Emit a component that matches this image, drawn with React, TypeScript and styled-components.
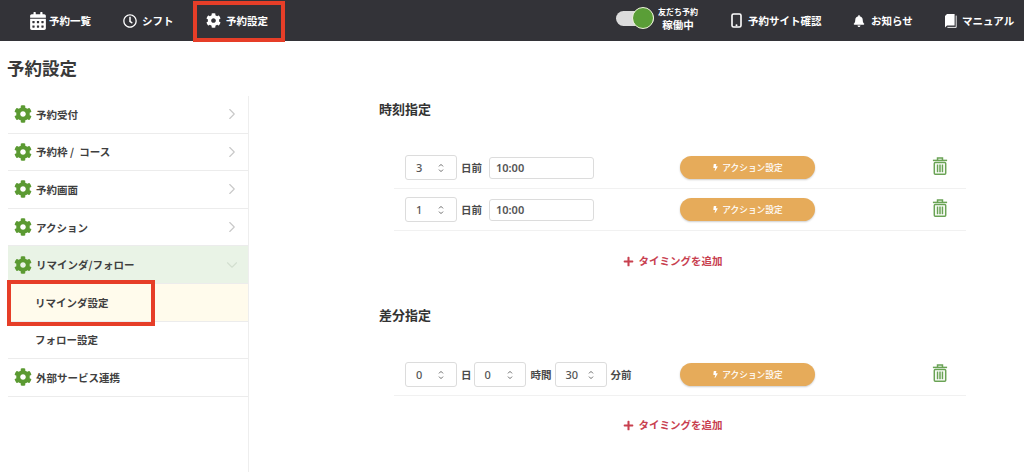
import React from 'react';
import styled, { createGlobalStyle } from 'styled-components';
import { FaBell, FaBolt, FaCalendarAlt, FaCog, FaPlus, FaRegClock } from 'react-icons/fa';
import { FiChevronDown, FiChevronRight } from 'react-icons/fi';

const GlobalStyle = createGlobalStyle`
  html, body {
    margin: 0;
    padding: 0;
    background: #fff;
    overflow: hidden;
  }
  body {
    font-family: "Noto Sans CJK JP", "Noto Sans", sans-serif;
    color: #3a3a3a;
  }
  * {
    box-sizing: border-box;
  }
`;

const Page = styled.div`
  width: 1024px;
  height: 472px;
  overflow: hidden;
`;

const Header = styled.header`
  height: 41px;
  background: #333338;
  display: flex;
  align-items: center;
  color: #fff;
  padding-left: 29px;
`;

const NavItem = styled.div<{ $width: number; $gap?: number }>`
  position: relative;
  height: 41px;
  width: ${(p) => p.$width}px;
  display: flex;
  align-items: center;
  gap: ${(p) => p.$gap ?? 5}px;
  font-size: 10.5px;
  font-weight: 700;
  white-space: nowrap;
`;

const HeaderBox = styled.div`
  position: absolute;
  left: -13px;
  top: 1px;
  width: 92px;
  height: 41px;
  border: 4px solid #e63e28;
`;

const Spacer = styled.div`
  flex: 1;
`;

const Toggle = styled.div`
  position: relative;
  width: 38px;
  height: 15px;
  border-radius: 8px;
  background: #dcdcdc;
  margin: 0 2px 5px 0;
`;

const Knob = styled.div`
  position: absolute;
  right: 0;
  top: -3.5px;
  width: 22px;
  height: 22px;
  border-radius: 50%;
  background: #5a9e37;
  border: 1.5px solid #eef3dc;
`;

const ToggleLabel = styled.div`
  width: 44px;
  display: flex;
  flex-direction: column;
  align-items: center;
  margin: 0 31px 3px 0;
  line-height: 1;
`;

const ToggleSmall = styled.span`
  font-size: 8px;
  font-weight: 700;
  margin-bottom: 4px;
  white-space: nowrap;
`;

const ToggleMain = styled.span`
  font-size: 10.5px;
  font-weight: 700;
`;

const PageTitle = styled.h1`
  margin: 0;
  height: 55px;
  padding: 14px 0 0 7px;
  font-size: 17.5px;
  line-height: 25px;
  font-weight: 700;
  color: #3a3a3a;
`;

const Body = styled.div`
  display: flex;
  align-items: flex-start;
`;

const Sidebar = styled.nav`
  width: 241px;
  height: 376px;
  margin-left: 8px;
  border-right: 1px solid #eeeeee;
`;

const MenuRow = styled.div<{ $open?: boolean; $current?: boolean }>`
  position: relative;
  height: 37.6px;
  display: flex;
  align-items: center;
  gap: 4px;
  padding: 0 7px 0 6px;
  border-bottom: 1px solid #ececec;
  background: ${(p) => (p.$open ? '#e9f3e6' : p.$current ? '#fffbec' : '#fff')};
  font-size: 10.5px;
  font-weight: 700;
  color: #3f3f3f;
`;

const SubRow = styled(MenuRow)`
  padding-left: 27px;
`;

const MenuLabel = styled.span`
  flex: 1;
  white-space: nowrap;
`;

const SideBox = styled.div`
  position: absolute;
  z-index: 2;
  left: -1px;
  top: -4px;
  width: 148px;
  height: 46px;
  border: 4px solid #e63e28;
`;

const Main = styled.main`
  flex: 1;
  padding: 0 58px 0 130px;
`;

const SectionTitle = styled.h2<{ $height: number }>`
  margin: 0;
  height: ${(p) => p.$height}px;
  font-size: 13px;
  line-height: 25px;
  font-weight: 700;
  color: #333;
`;

const Rows = styled.div`
  margin-left: 15px;
`;

const Row = styled.div`
  height: 42px;
  display: flex;
  align-items: center;
  padding: 0 11px;
  border-bottom: 1px solid #f1f1f1;
`;

const FieldGroup = styled.div`
  width: 275px;
  display: flex;
  align-items: center;
`;

const NumberBox = styled.div`
  width: 52px;
  height: 25px;
  display: flex;
  align-items: center;
  justify-content: space-between;
  padding: 0 12px 0 10px;
  border: 1px solid #dcdcdc;
  border-radius: 3px;
  font-family: "Noto Sans", sans-serif;
  font-size: 11px;
  font-weight: 500;
  color: #555;
`;

const Unit = styled.span<{ $left?: number; $right?: number }>`
  margin: 0 ${(p) => p.$right ?? 3}px 0 ${(p) => p.$left ?? 4}px;
  font-size: 10.5px;
  font-weight: 700;
  color: #4a4a4a;
  white-space: nowrap;
`;

const TimeBox = styled.div`
  width: 105px;
  height: 22px;
  display: flex;
  align-items: center;
  padding-left: 6px;
  border: 1px solid #dcdcdc;
  border-radius: 3px;
  font-family: "Noto Sans", sans-serif;
  font-size: 11px;
  font-weight: 600;
  color: #555;
`;

const ActionButton = styled.div`
  width: 135px;
  height: 23px;
  display: flex;
  align-items: center;
  justify-content: center;
  gap: 3px;
  border-radius: 12px;
  background: #e6ab5a;
  box-shadow: 0 1px 2px rgba(0, 0, 0, 0.2);
  color: #fff;
  font-size: 8.7px;
  font-weight: 500;
`;

const Trash = styled.div`
  margin: 0 7px 3px auto;
  display: flex;
`;

const AddRow = styled.div<{ $height: number; $top: number }>`
  height: ${(p) => p.$height}px;
  padding-top: ${(p) => p.$top}px;
  display: flex;
  justify-content: center;
  gap: 5px;
  color: #c8404f;
  font-size: 10.5px;
  font-weight: 700;
  line-height: 16px;
`;

const AddIcon = styled.span`
  display: flex;
  align-items: center;
  height: 16px;
  font-size: 11px;
`;

const GearIcon = styled(FaCog)`
  color: #5b9a32;
  font-size: 18px;
  flex-shrink: 0;
`;

const Stepper: React.FC = () => (
  <svg width="6" height="10" viewBox="0 0 6 10" fill="none" stroke="#6a6a6a" strokeWidth="1">
    <path d="M1 3.4 3 1.4 5 3.4" />
    <path d="M1 6.6 3 8.6 5 6.6" />
  </svg>
);

const PhoneIcon: React.FC = () => (
  <svg width="11" height="15" viewBox="0 0 11 15" fill="none">
    <rect x="1" y="1" width="9" height="13" rx="1.6" stroke="#fff" strokeWidth="1.6" />
    <circle cx="5.5" cy="12.2" r="1" fill="#fff" />
  </svg>
);

const BookIcon: React.FC = () => (
  <svg width="12" height="14" viewBox="0 0 12 14">
    <path d="M0 2 2 0H9.6V11.6H2L0 13.4Z" fill="#fff" />
    <path d="M11.2 1.6V13.4H2.4" fill="none" stroke="#fff" strokeWidth="0.9" />
  </svg>
);

const TrashIcon: React.FC = () => (
  <svg width="16" height="18" viewBox="0 0 16 19" fill="none" stroke="#6aa355" strokeWidth="1.6">
    <path d="M0.5 3.6H15.5" />
    <path d="M5.4 3.4V1H10.6V3.4" />
    <rect x="2" y="5.8" width="12" height="12.4" rx="1" />
    <path d="M5.4 8V16M8 8V16M10.6 8V16" />
  </svg>
);

const NumberField: React.FC<{ value: string }> = ({ value }) => (
  <NumberBox>
    <span>{value}</span>
    <Stepper />
  </NumberBox>
);

const Action: React.FC = () => (
  <ActionButton>
    <FaBolt size={7} />
    アクション設定
  </ActionButton>
);

const DayRow: React.FC<{ days: string }> = ({ days }) => (
  <Row>
    <FieldGroup>
      <NumberField value={days} />
      <Unit $right={7}>日前</Unit>
      <TimeBox>10:00</TimeBox>
    </FieldGroup>
    <Action />
    <Trash>
      <TrashIcon />
    </Trash>
  </Row>
);

const AddTiming: React.FC<{ height: number; top: number }> = ({ height, top }) => (
  <AddRow $height={height} $top={top}>
    <AddIcon>
      <FaPlus />
    </AddIcon>
    タイミングを追加
  </AddRow>
);

const menu = ['予約受付', '予約枠\u00a0/\u2002コース', '予約画面', 'アクション'];

const App: React.FC = () => {
  return (
    <Page>
      <GlobalStyle />
      <Header>
        <NavItem $width={94} $gap={2}>
          <FaCalendarAlt size={18} />
          予約一覧
        </NavItem>
        <NavItem $width={83}>
          <FaRegClock size={14} />
          シフト
        </NavItem>
        <NavItem $width={410}>
          <FaCog size={15} />
          予約設定
          <HeaderBox />
        </NavItem>
        <Toggle>
          <Knob />
        </Toggle>
        <ToggleLabel>
          <ToggleSmall>友だち予約</ToggleSmall>
          <ToggleMain>稼働中</ToggleMain>
        </ToggleLabel>
        <NavItem $width={122} $gap={6}>
          <PhoneIcon />
          予約サイト確認
        </NavItem>
        <NavItem $width={92} $gap={6}>
          <FaBell size={12} />
          お知らせ
        </NavItem>
        <NavItem $width={78} $gap={5}>
          <BookIcon />
          マニュアル
        </NavItem>
        <Spacer />
      </Header>
      <PageTitle>予約設定</PageTitle>
      <Body>
        <Sidebar>
          {menu.map((label) => (
            <MenuRow key={label}>
              <GearIcon />
              <MenuLabel>{label}</MenuLabel>
              <FiChevronRight size={18} color="#c8c8c8" strokeWidth={1.5} />
            </MenuRow>
          ))}
          <MenuRow $open>
            <GearIcon />
            <MenuLabel>リマインダ/フォロー</MenuLabel>
            <FiChevronDown size={18} color="#d3dfd0" strokeWidth={1.5} />
          </MenuRow>
          <SubRow $current>
            <MenuLabel>リマインダ設定</MenuLabel>
            <SideBox />
          </SubRow>
          <SubRow>
            <MenuLabel>フォロー設定</MenuLabel>
          </SubRow>
          <MenuRow>
            <GearIcon />
            <MenuLabel>外部サービス連携</MenuLabel>
          </MenuRow>
        </Sidebar>
        <Main>
          <SectionTitle $height={51}>時刻指定</SectionTitle>
          <Rows>
            <DayRow days="3" />
            <DayRow days="1" />
          </Rows>
          <AddTiming height={71} top={22} />
          <SectionTitle $height={52}>差分指定</SectionTitle>
          <Rows>
            <Row>
              <FieldGroup>
                <NumberField value="0" />
                <Unit $right={2}>日</Unit>
                <NumberField value="0" />
                <Unit $left={5} $right={3}>時間</Unit>
                <NumberField value="30" />
                <Unit>分前</Unit>
              </FieldGroup>
              <Action />
              <Trash>
                <TrashIcon />
              </Trash>
            </Row>
          </Rows>
          <AddTiming height={60} top={21} />
        </Main>
      </Body>
    </Page>
  );
};

export default App;
